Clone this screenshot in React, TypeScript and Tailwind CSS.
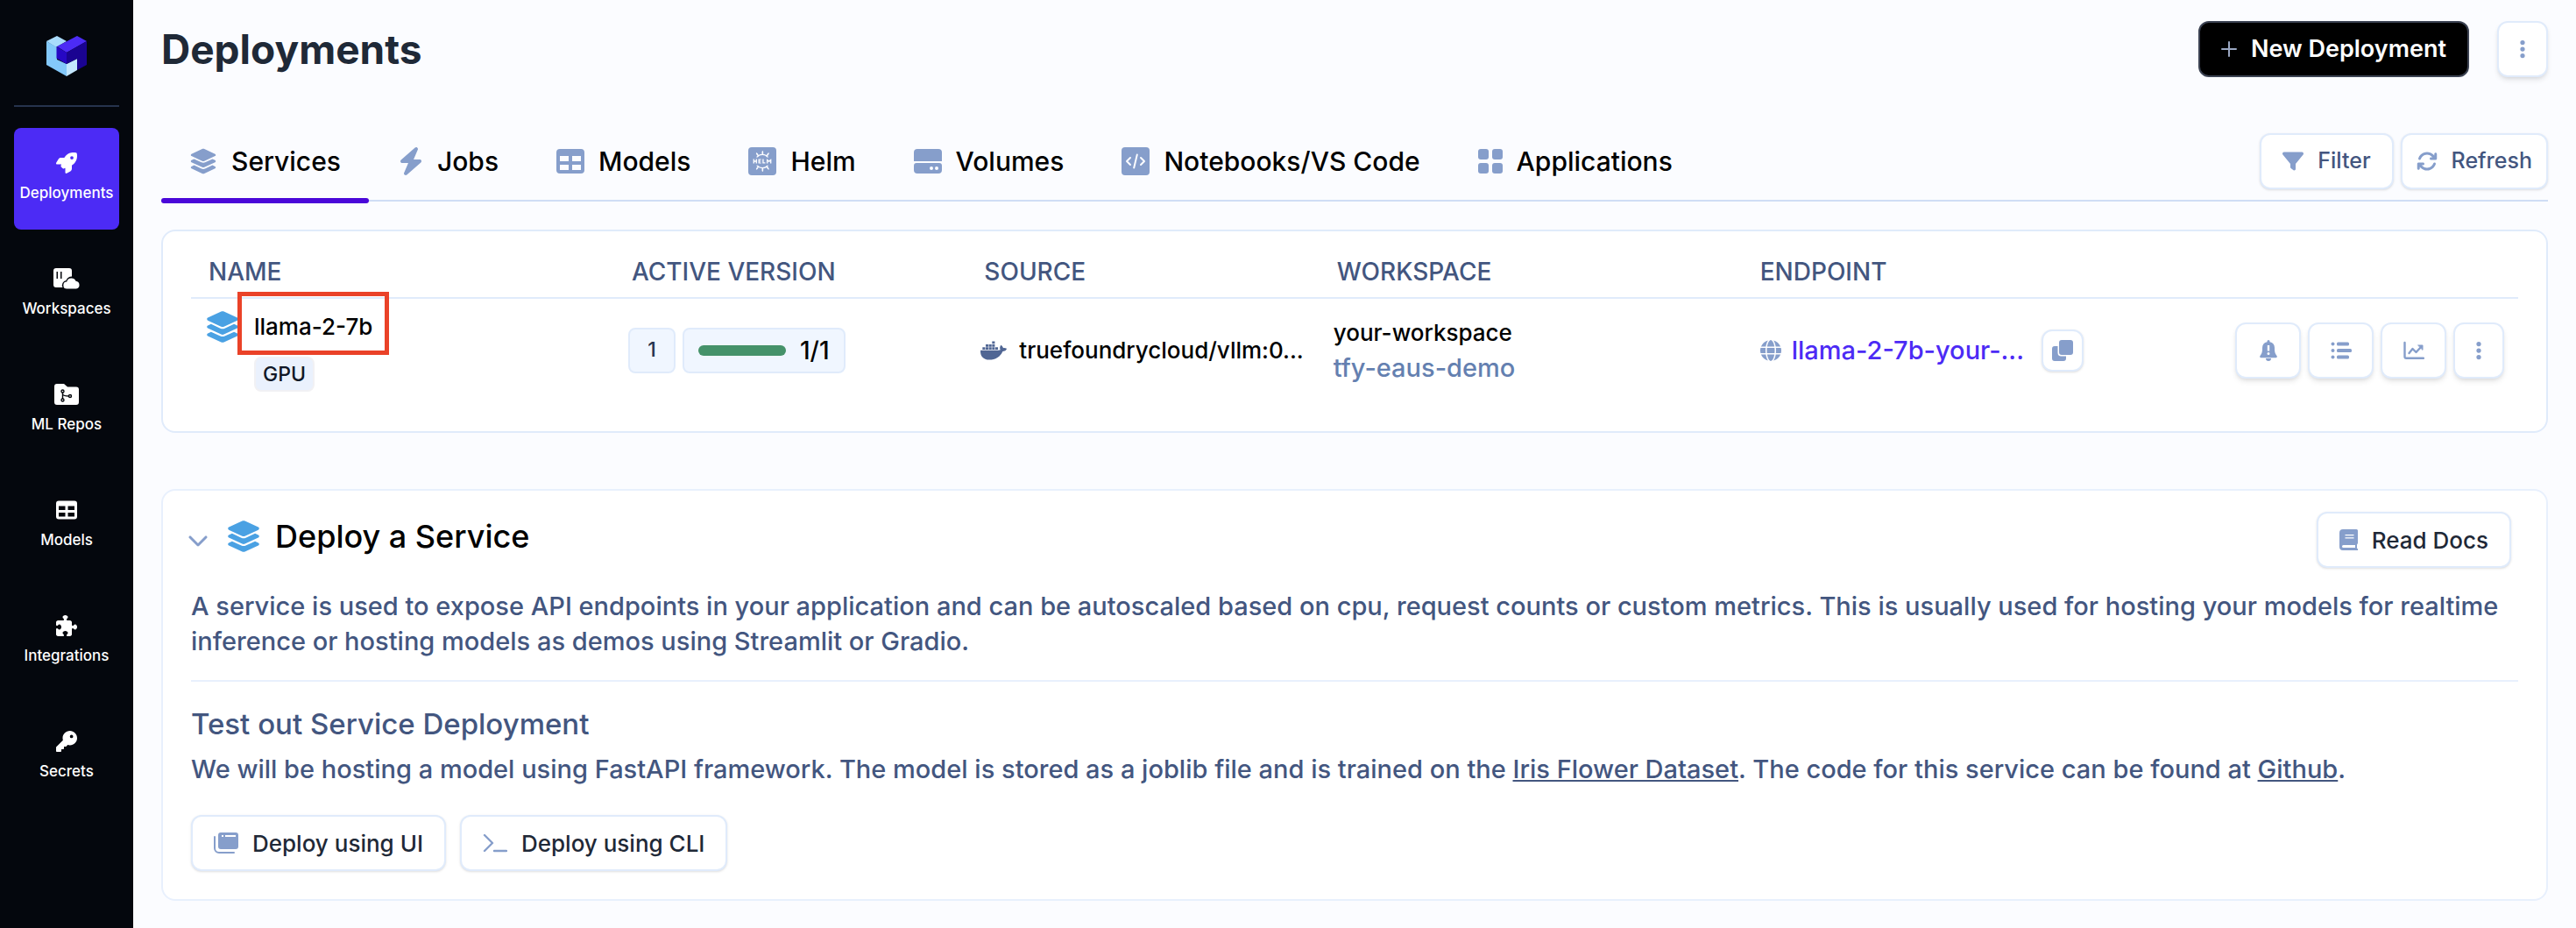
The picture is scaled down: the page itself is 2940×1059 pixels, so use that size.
import type { ReactNode, SVGProps } from "react"
import {
  FaArrowsRotate,
  FaBolt,
  FaChevronDown,
  FaDocker,
  FaEllipsisVertical,
  FaFilter,
  FaGlobe,
  FaKey,
  FaLayerGroup,
  FaPuzzlePiece,
  FaRocket,
} from "react-icons/fa6"
import { SiHelm } from "react-icons/si"

type IconProps = SVGProps<SVGSVGElement>

function Logo() {
  return (
    <svg viewBox="0 0 46 46" className="h-[46px] w-[46px]" aria-hidden="true">
      <path d="M0 6 12 0l11 6-12 7z" fill="#a9dbfc" />
      <path d="M0 6l12 7v14l11 5v14L0 33z" fill="#83c8fa" />
      <path d="M23 32l12-6v13l-12 7z" fill="#c3e6fd" />
      <path d="M12 12 35 0l11 6-23 13z" fill="#4c2bf5" />
      <path d="M11.500 12 23 19v13l-11.500-6.500z" fill="#2607c4" />
      <path d="M23 19 46 6v27l-11 6V26l-12 6z" fill="#1a0391" />
    </svg>
  )
}

function WorkspaceIcon(props: IconProps) {
  return (
    <svg viewBox="0 0 30 24" fill="currentColor" aria-hidden="true" {...props}>
      <path d="M3 0h15a3 3 0 0 1 3 3v6.500a7 7 0 0 0-6.500 4.500 5.500 5.500 0 0 0-4 8H3a3 3 0 0 1-3-3V3a3 3 0 0 1 3-3zm.500 4v8H5V4zm4.500 0v8h1.500V4z" fillRule="evenodd" />
      <path d="M15.500 23.500a4 4 0 0 1-.300-8 5.500 5.500 0 0 1 10.300-.700 4.400 4.400 0 0 1 .500 8.700z" />
    </svg>
  )
}

function RepoIcon(props: IconProps) {
  return (
    <svg viewBox="0 0 28 24" aria-hidden="true" {...props}>
      <path d="M3 0h8l4 3.500h10a3 3 0 0 1 3 3V21a3 3 0 0 1-3 3H3a3 3 0 0 1-3-3V3a3 3 0 0 1 3-3z" fill="currentColor" />
      <g fill="none" stroke="#04070d" strokeWidth="1.400">
        <circle cx="9.500" cy="8.500" r="1.500" />
        <circle cx="9.500" cy="18.500" r="1.500" />
        <circle cx="18" cy="14" r="1.500" />
        <path d="M9.500 10v7M9.500 12c1 2 3 2 7 2" />
      </g>
    </svg>
  )
}

function TableIcon(props: IconProps) {
  return (
    <svg viewBox="0 0 32 28" fill="currentColor" aria-hidden="true" {...props}>
      <path
        fillRule="evenodd"
        d="M4 0h24a4 4 0 0 1 4 4v20a4 4 0 0 1-4 4H4a4 4 0 0 1-4-4V4a4 4 0 0 1 4-4zm0 8v6h10V8zm14 0v6h10V8zM4 18v6h10v-6zm14 0v6h10v-6z"
      />
    </svg>
  )
}

function HelmIcon() {
  return (
    <span className="flex h-8 w-8 items-center justify-center rounded bg-[#869ecb] text-[#fbfcff]">
      <SiHelm className="h-6 w-6" aria-hidden="true" />
    </span>
  )
}

function VolumeIcon(props: IconProps) {
  return (
    <svg viewBox="0 0 32 28" fill="currentColor" aria-hidden="true" {...props}>
      <path d="M4 0h24a4 4 0 0 1 4 4v10H0V4a4 4 0 0 1 4-4z" />
      <path fillRule="evenodd" d="M3 16h26a3 3 0 0 1 3 3v5a4 4 0 0 1-4 4H4a4 4 0 0 1-4-4v-5a3 3 0 0 1 3-3zm17 4a2 2 0 1 0 0 4 2 2 0 0 0 0-4zm6 0a2 2 0 1 0 0 4 2 2 0 0 0 0-4z" />
    </svg>
  )
}

function CodeIcon(props: IconProps) {
  return (
    <svg viewBox="0 0 32 32" aria-hidden="true" {...props}>
      <rect width="32" height="32" rx="4" fill="currentColor" />
      <path d="M10 12l-4 4 4 4M22 12l4 4-4 4M17.800 8.500l-3.600 15" fill="none" stroke="#fbfcff" strokeWidth="2" strokeLinecap="round" strokeLinejoin="round" />
    </svg>
  )
}

function GridIcon(props: IconProps) {
  return (
    <svg viewBox="0 0 28 28" fill="currentColor" aria-hidden="true" {...props}>
      <rect width="12" height="12" rx="3" />
      <rect x="16" width="12" height="12" rx="3" />
      <rect y="16" width="12" height="12" rx="3" />
      <rect x="16" y="16" width="12" height="12" rx="3" />
    </svg>
  )
}

function PlusIcon(props: IconProps) {
  return (
    <svg viewBox="0 0 18 18" fill="none" stroke="currentColor" strokeWidth="2" strokeLinecap="round" aria-hidden="true" {...props}>
      <path d="M9 1v16M1 9h16" />
    </svg>
  )
}

function CopyIcon(props: IconProps) {
  return (
    <svg viewBox="0 0 24 24" fill="currentColor" aria-hidden="true" {...props}>
      <path d="M11 0h10a3 3 0 0 1 3 3v11a3 3 0 0 1-3 3H11a3 3 0 0 1-3-3V3a3 3 0 0 1 3-3z" />
      <path d="M3 7h3.500v7.500a4 4 0 0 0 4 4H16V21a3 3 0 0 1-3 3H3a3 3 0 0 1-3-3V10a3 3 0 0 1 3-3z" />
    </svg>
  )
}

function BellIcon(props: IconProps) {
  return (
    <svg viewBox="0 0 24 24" fill="currentColor" aria-hidden="true" {...props}>
      <path
        fillRule="evenodd"
        d="M12 0a1.500 1.500 0 0 1 1.500 1.500v.700A7 7 0 0 1 19 9v2c0 3 1 5 2.500 7 .800 1 .200 2.200-1 2.200h-17c-1.200 0-1.800-1.200-1-2.200C4 16 5 14 5 11V9a7 7 0 0 1 5.500-6.800v-.700A1.500 1.500 0 0 1 12 0zm-1.200 6v6.500h2.400V6zm1.200 8a1.500 1.500 0 1 0 0 3 1.500 1.500 0 0 0 0-3z"
      />
      <path d="M9 21h6a3 3 0 0 1-6 0z" />
    </svg>
  )
}

function ListIcon(props: IconProps) {
  return (
    <svg viewBox="0 0 24 24" fill="currentColor" aria-hidden="true" {...props}>
      <circle cx="2.500" cy="4.500" r="2" />
      <circle cx="2.500" cy="12" r="2" />
      <circle cx="2.500" cy="19.500" r="2" />
      <rect x="7" y="2.500" width="14" height="4" rx="1.500" />
      <rect x="7" y="10" width="17" height="4" rx="1.500" />
      <rect x="7" y="17.500" width="14" height="4" rx="1.500" />
    </svg>
  )
}

function ChartIcon(props: IconProps) {
  return (
    <svg viewBox="0 0 24 24" fill="none" stroke="currentColor" strokeWidth="2.400" strokeLinecap="round" strokeLinejoin="round" aria-hidden="true" {...props}>
      <path d="M1.500 3v16a1.800 1.800 0 0 0 1.800 1.800H23" />
      <path d="M6.500 15l4-5 4 4 6-6.500" />
      <path d="M17 6h5v5z" fill="currentColor" strokeWidth="1" />
    </svg>
  )
}

function BookIcon(props: IconProps) {
  return (
    <svg viewBox="0 0 21 24" fill="currentColor" aria-hidden="true" {...props}>
      <path
        fillRule="evenodd"
        d="M4 0h15.500A1.500 1.500 0 0 1 21 1.500V16l-1 1.500V22h1v2H4a4 4 0 0 1-4-4V4a4 4 0 0 1 4-4zm2.500 6v1.300h10V6zm0 3.200v1.300h10V9.200zM4.500 18a1.500 1.500 0 0 0 0 3H18v-3z"
      />
    </svg>
  )
}

function WindowsIcon(props: IconProps) {
  return (
    <svg viewBox="0 0 28 24" fill="currentColor" aria-hidden="true" {...props}>
      <path fillRule="evenodd" d="M8 0h17a3 3 0 0 1 3 3v13a3 3 0 0 1-3 3H8a3 3 0 0 1-3-3V3a3 3 0 0 1 3-3zm1 3v2h2V3zm4 0v2h12V3z" />
      <path d="M1 5v13a5 5 0 0 0 5 5h17" fill="none" stroke="currentColor" strokeWidth="2" strokeLinecap="round" />
    </svg>
  )
}

function PromptIcon(props: IconProps) {
  return (
    <svg viewBox="0 0 28 24" fill="none" stroke="currentColor" strokeWidth="2.400" strokeLinecap="round" strokeLinejoin="round" aria-hidden="true" {...props}>
      <path d="M2 3l9 9-9 9M13 21h14" />
    </svg>
  )
}

const navItems = [
  { title: "Deployments", icon: <FaRocket className="h-6 w-6" />, active: true },
  { title: "Workspaces", icon: <WorkspaceIcon className="h-6 w-[30px]" /> },
  { title: "ML Repos", icon: <RepoIcon className="h-6 w-7" /> },
  { title: "Models", icon: <TableIcon className="h-6 w-6" /> },
  { title: "Integrations", icon: <FaPuzzlePiece className="h-6 w-6" /> },
  { title: "Secrets", icon: <FaKey className="h-6 w-6" /> },
]

const tabs = [
  { title: "Services", icon: <FaLayerGroup className="h-8 w-8" />, active: true },
  { title: "Jobs", icon: <FaBolt className="h-8 w-7" /> },
  { title: "Models", icon: <TableIcon className="h-7 w-8" /> },
  { title: "Helm", icon: <HelmIcon /> },
  { title: "Volumes", icon: <VolumeIcon className="h-7 w-8" /> },
  { title: "Notebooks/VS Code", icon: <CodeIcon className="h-8 w-8" /> },
  { title: "Applications", icon: <GridIcon className="h-7 w-7" /> },
]

const rowActions = [
  { label: "Alerts", icon: <BellIcon className="h-6 w-6" /> },
  { label: "Logs", icon: <ListIcon className="h-6 w-6" /> },
  { label: "Metrics", icon: <ChartIcon className="h-6 w-6" /> },
]

function OutlineButton({ icon, children }: { icon: ReactNode; children: ReactNode }) {
  return (
    <button
      type="button"
      className="flex h-16 items-center gap-4 rounded-xl border-2 border-[#e0ebfb] bg-white px-6 text-[26px] font-medium text-[#1f2937] shadow-sm"
    >
      <span className="text-[#869ecb]">{icon}</span>
      {children}
    </button>
  )
}

function IconButton({ label, className, children }: { label: string; className: string; children: ReactNode }) {
  return (
    <button
      type="button"
      aria-label={label}
      className={`flex items-center justify-center rounded-xl border-2 border-[#e0ebfb] bg-white text-[#869ecb] ${className}`}
    >
      {children}
    </button>
  )
}

function Sidebar() {
  return (
    <aside className="flex w-[152px] shrink-0 flex-col items-center bg-[#04070d] px-4 pt-[41px]">
      <Logo />
      <div className="mt-[33px] h-0.5 w-full bg-[#26334d]" />
      <nav className="mt-6 flex w-full flex-col gap-4">
        {navItems.map((item) => (
          <a
            key={item.title}
            href="#"
            className={`flex h-[116px] flex-col items-center rounded-lg pt-7 text-[17px] leading-6 font-medium text-white ${item.active ? "bg-[#4c2bf5]" : ""}`}
          >
            {item.icon}
            <span className="mt-[10px] whitespace-nowrap">{item.title}</span>
          </a>
        ))}
      </nav>
    </aside>
  )
}

function ServicesTable() {
  return (
    <section className="mt-8 rounded-2xl border-2 border-[#e0ebfb] bg-white px-8 pb-[34px]">
      <table className="w-full table-fixed border-collapse text-left">
        <thead>
          <tr className="h-[76px] border-b-2 border-[#e0ebfb] text-[28px] font-medium text-[#43567f]">
            <th className="w-6/33 px-5 pt-4 font-medium">NAME</th>
            <th className="w-5/33 px-5 pt-4 font-medium">ACTIVE VERSION</th>
            <th className="w-5/33 px-5 pt-4 font-medium">SOURCE</th>
            <th className="w-6/33 px-5 pt-4 font-medium">WORKSPACE</th>
            <th className="px-5 pt-4 font-medium">ENDPOINT</th>
          </tr>
        </thead>
        <tbody>
          <tr className="h-[118px] text-[26px] font-medium text-black">
            <td className="px-4 align-top">
              <div className="flex gap-4 pt-3">
                <FaLayerGroup className="h-10 w-10 text-[#4aa1e3]" aria-hidden="true" />
                <div className="flex flex-col items-start">
                  <span className="relative leading-10">
                    llama-2-7b
                    <span className="pointer-events-none absolute -inset-x-[19px] -top-5 -bottom-3 border-[5px] border-[#ea4228]" />
                  </span>
                  <span className="mt-[14px] flex h-10 items-center rounded-lg border-2 border-[#f1f1f4] bg-[#eaf1fd] px-2 text-[23px] text-[#111827]">
                    GPU
                  </span>
                </div>
              </div>
            </td>
            <td className="px-4">
              <div className="flex gap-2">
                <span className="flex h-[52px] w-[54px] items-center justify-center rounded-lg border-2 border-[#e0ebfb] bg-[#f0f6ff] text-[23px] text-[#26334d]">
                  1
                </span>
                <span className="flex h-[52px] items-center gap-4 rounded-lg border-2 border-[#e0ebfb] bg-[#f0f6ff] px-4 text-[28px]">
                  <span className="h-3 w-[100px] rounded-full bg-[#45926a]" />
                  1/1
                </span>
              </div>
            </td>
            <td className="pl-4">
              <div className="flex items-center gap-[14px]">
                <FaDocker className="h-[30px] w-[30px] shrink-0 text-[#506694]" aria-hidden="true" />
                <span className="whitespace-nowrap">truefoundrycloud/vllm:0...</span>
              </div>
            </td>
            <td className="px-4 leading-10">
              <div>your-workspace</div>
              <div className="text-[29px] text-[#6480b0]">tfy-eaus-demo</div>
            </td>
            <td className="pr-4 pl-5">
              <div className="flex items-center justify-between">
                <div className="flex items-center">
                  <FaGlobe className="h-6 w-6 text-[#869ecb]" aria-hidden="true" />
                  <a href="#" className="ml-3 text-[29px] text-[#4c2bf5]">
                    llama-2-7b-your-...
                  </a>
                  <IconButton label="Copy endpoint" className="ml-5 h-12 w-12 shadow-sm">
                    <CopyIcon className="h-6 w-6" />
                  </IconButton>
                </div>
                <div className="flex gap-2">
                  {rowActions.map((action) => (
                    <IconButton key={action.label} label={action.label} className="h-16 w-[75px] shadow-md">
                      {action.icon}
                    </IconButton>
                  ))}
                  <IconButton label="More actions" className="h-16 w-[58px] shadow-md">
                    <FaEllipsisVertical className="h-6 w-6" />
                  </IconButton>
                </div>
              </div>
            </td>
          </tr>
        </tbody>
      </table>
    </section>
  )
}

function DeployCard() {
  return (
    <section className="mt-16 rounded-2xl border-2 border-[#e8f0fd] bg-white px-8 pt-6 pb-8">
      <div className="flex items-center">
        <button type="button" aria-label="Collapse" className="-ml-1 text-[#869ecb]">
          <FaChevronDown className="h-6 w-6" />
        </button>
        <div className="ml-5 flex items-center gap-4 pb-2">
          <FaLayerGroup className="h-10 w-10 text-[#4aa1e3]" aria-hidden="true" />
          <h2 className="text-[36px] leading-10 font-medium text-black">Deploy a Service</h2>
        </div>
        <div className="mr-2 ml-auto">
          <OutlineButton icon={<BookIcon className="h-6 w-[21px]" />}>Read Docs</OutlineButton>
        </div>
      </div>
      <div className="mt-6 border-b-2 border-[#e8f0fd] pb-6 text-[29px] leading-10 font-medium text-[#43567f]">
        <p>
          A service is used to expose API endpoints in your application and can be autoscaled based on cpu, request
          counts or custom metrics. This is usually used for hosting your models for realtime inference or hosting
          models as demos using Streamlit or Gradio.
        </p>
      </div>
      <h3 className="mt-7 text-[33px] leading-10 font-medium text-[#43567f]">Test out Service Deployment</h3>
      <p className="mt-3 text-[29px] leading-10 font-medium text-[#43567f]">
        We will be hosting a model using FastAPI framework. The model is stored as a joblib file and is trained on the{" "}
        <a href="#" className="underline">
          Iris Flower Dataset
        </a>
        . The code for this service can be found at{" "}
        <a href="#" className="underline">
          Github
        </a>
        .
      </p>
      <div className="mt-8 flex gap-4">
        <OutlineButton icon={<WindowsIcon className="h-6 w-7" />}>Deploy using UI</OutlineButton>
        <OutlineButton icon={<PromptIcon className="h-6 w-7" />}>Deploy using CLI</OutlineButton>
      </div>
    </section>
  )
}

export default function App() {
  return (
    <div className="flex min-h-screen bg-[#fbfcff] font-['Inter',sans-serif]">
      <Sidebar />
      <main className="min-w-0 flex-1 px-8 pt-6 pb-7">
        <header className="flex items-center justify-between">
          <h1 className="text-[46px] leading-[64px] font-bold text-[#1f2937]">Deployments</h1>
          <div className="flex gap-8">
            <button
              type="button"
              className="flex h-16 items-center gap-4 rounded-xl border-2 border-[#3b4252] bg-black px-6 text-[27px] font-semibold text-white"
            >
              <PlusIcon className="h-[18px] w-[18px] text-[#9aa7c2]" />
              New Deployment
            </button>
            <IconButton label="More" className="h-16 w-[58px] shadow-md">
              <FaEllipsisVertical className="h-6 w-6" />
            </IconButton>
          </div>
        </header>

        <div className="mt-16 flex justify-between border-b-2 border-[#cfddf5]">
          <nav className="-mb-1 flex gap-0.5">
            {tabs.map((tab) => (
              <button
                key={tab.title}
                type="button"
                className="relative flex h-20 items-center gap-4 px-8 pb-4 text-[30px] font-medium text-black"
              >
                <span className="text-[#869ecb]">{tab.icon}</span>
                {tab.title}
                {tab.active && <span className="absolute inset-x-0 bottom-0 h-1.5 rounded-full bg-[#4a07d9]" />}
              </button>
            ))}
          </nav>
          <div className="flex gap-2">
            <button
              type="button"
              className="flex h-16 items-center gap-4 rounded-xl border-2 border-[#e0ebfb] bg-white px-6 text-[25px] font-medium text-[#43567f] shadow-sm"
            >
              <FaFilter className="h-6 w-6 text-[#869ecb]" />
              Filter
            </button>
            <button
              type="button"
              className="flex h-16 items-center gap-4 rounded-xl border-2 border-[#e0ebfb] bg-white px-4 text-[25px] font-medium text-[#43567f] shadow-sm"
            >
              <FaArrowsRotate className="h-6 w-6 text-[#869ecb]" />
              Refresh
            </button>
          </div>
        </div>

        <ServicesTable />
        <DeployCard />
      </main>
    </div>
  )
}
